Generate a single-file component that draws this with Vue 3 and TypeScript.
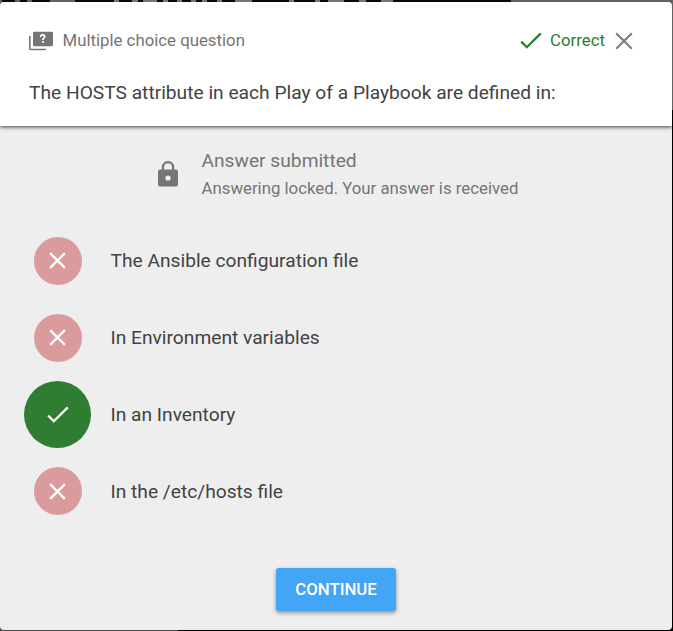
<script setup lang="ts">
interface Answer {
  label: string
  correct: boolean
}

const answers: Answer[] = [
  { label: 'The Ansible configuration file', correct: false },
  { label: 'In Environment variables', correct: false },
  { label: 'In an Inventory', correct: true },
  { label: 'In the /etc/hosts file', correct: false },
]
</script>

<template>
  <div class="backdrop">
    <main class="dialog">
      <header class="head">
        <div class="meta">
          <svg class="quiz-icon" viewBox="0 0 24 20">
            <path d="M.8 5v12.7q0 .8.8.8H17" fill="none" stroke="#757575" stroke-width="1.6" />
            <rect x="4" y="0.8" width="20" height="14.4" rx="1.4" fill="#757575" />
            <path d="M11.7 5.9c0-1.4.8-2 2-2s2 .7 2 1.8c0 1.5-1.8 1.6-1.8 3.2" fill="none" stroke="#fff" stroke-width="1.7" />
            <rect x="13" y="10" width="1.8" height="1.8" fill="#fff" />
          </svg>
          <span class="kind">Multiple choice question</span>
          <svg class="result-icon" viewBox="0 0 22 18">
            <path d="M1.2 9.6l5.6 5.6L20.8 1.4" fill="none" stroke="#2e7d32" stroke-width="2.3" />
          </svg>
          <span class="result">Correct</span>
          <svg class="close-icon" viewBox="0 0 18 18">
            <path d="M1.2 1.2l15.6 15.6M16.8 1.2L1.2 16.8" fill="none" stroke="#857d79" stroke-width="2.2" />
          </svg>
        </div>
        <h1 class="question">The HOSTS attribute in each Play of a Playbook are defined in:</h1>
      </header>

      <section class="status">
        <svg class="lock-icon" viewBox="0 0 20 26">
          <path d="M4.9 9V6.2a5.1 5.1 0 0 1 10.2 0V9" fill="none" stroke="#757575" stroke-width="2.2" />
          <path fill-rule="evenodd" d="M2 8.6h16a2 2 0 0 1 2 2v13a2 2 0 0 1-2 2H2a2 2 0 0 1-2-2v-13a2 2 0 0 1 2-2zM10 14.5a2.6 2.6 0 1 0 0 5.2 2.6 2.6 0 0 0 0-5.2z" fill="#757575" />
        </svg>
        <div class="status-text">
          <div class="status-title">Answer submitted</div>
          <div class="status-sub">Answering locked. Your answer is received</div>
        </div>
      </section>

      <ul class="answers">
        <li v-for="a in answers" :key="a.label" class="answer">
          <span class="slot">
            <span class="mark" :class="{ correct: a.correct }">
              <svg v-if="a.correct" class="tick" viewBox="0 0 22 18">
                <path d="M1.2 9.6l5.6 5.6L20.8 1.4" fill="none" stroke="#fff" stroke-width="2.3" />
              </svg>
              <svg v-else class="cross" viewBox="0 0 18 18">
                <path d="M1.2 1.2l15.6 15.6M16.8 1.2L1.2 16.8" fill="none" stroke="#fff" stroke-width="2.4" />
              </svg>
            </span>
          </span>
          <span class="label">{{ a.label }}</span>
        </li>
      </ul>

      <button class="continue" type="button">CONTINUE</button>
    </main>
  </div>
</template>

<style>
body {
  margin: 0;
  overflow: hidden;
}
</style>

<style scoped>
.backdrop {
  box-sizing: border-box;
  width: 673px;
  height: 631px;
  padding: 2px 1px 1px 0;
  background:
    linear-gradient(90deg, #626262 2px, #0a0708 2px 15px, #626262 15px 20px, #0a0708 20px 27px, #626262 27px 32px, #0a0708 32px 50px, #626262 50px 75px, #0a0708 75px 114px, #777 114px 119px, #0a0708 119px 132px, #777 132px 138px, #0a0708 138px 143px, #777 143px 157px, #0a0708 157px 163px, #777 163px 168px, #0a0708 168px 177px, #777 177px 182px, #0a0708 182px 191px, #777 191px 196px, #0a0708 196px 202px, #777 202px 207px, #0a0708 207px 217px, #777 217px 222px, #0a0708 222px 235px, #777 235px 252px, #0a0708 252px 289px, #777 289px 294px, #0a0708 294px 315px, #777 315px 320px, #0a0708 320px 328px, #777 328px 344px, #0a0708 344px 359px, #777 359px 366px, #0a0708 366px 381px, #777 381px 393px, #0a0708 393px 511px, #626262 511px) 0 0 / 673px 2px no-repeat,
    linear-gradient(#626262 0 110px, #000 110px) 100% 0 / 1px 631px no-repeat,
    linear-gradient(90deg, #4b4b4b 178px, #000 178px) 0 100% / 673px 4px no-repeat,
    #555;
}

.dialog {
  display: flex;
  flex-direction: column;
  width: 672px;
  height: 628px;
  overflow: hidden;
  border-radius: 4px;
  background: #eee;
  font-family: Roboto, "Liberation Sans", sans-serif;
  color: #424242;
}

.head {
  box-sizing: border-box;
  flex: none;
  height: 124px;
  padding: 26px 39px 0 29px;
  background: #fff;
  box-shadow: 0 1px 4px rgba(0, 0, 0, 0.75);
}

.meta {
  display: flex;
  align-items: center;
  height: 26px;
  font-size: 16.8px;
  line-height: 24px;
  color: #757575;
}

.quiz-icon {
  width: 24px;
  height: 20px;
}

.kind {
  margin-left: 9.5px;
  padding-bottom: 2px;
}

.result-icon {
  width: 22px;
  height: 18px;
  margin-left: auto;
}

.result {
  margin: 0 10px 0 8.5px;
  padding-bottom: 2px;
  color: #2e7d32;
}

.close-icon {
  width: 18px;
  height: 18px;
}

.question {
  margin: 24px 0 0;
  font-size: 19.2px;
  font-weight: 400;
  line-height: 30px;
  white-space: nowrap;
}

.status {
  display: flex;
  flex: none;
  align-items: center;
  height: 62px;
  margin: 17px 0 0 158px;
  color: #757575;
}

.lock-icon {
  width: 20px;
  height: 26px;
}

.status-text {
  margin: -2px 0 0 23.5px;
}

.status-title {
  font-size: 19.2px;
  line-height: 32px;
}

.status-sub {
  padding-bottom: 2px;
  font-size: 16.8px;
  line-height: 22px;
}

.answers {
  flex: none;
  margin: 17.5px 0 0;
  padding: 0 0 0 24px;
  list-style: none;
}

.answer {
  display: flex;
  align-items: center;
  height: 76.8px;
  font-size: 19.2px;
}

.slot {
  display: flex;
  justify-content: center;
  width: 67px;
}

.mark {
  display: flex;
  align-items: center;
  justify-content: center;
  width: 48px;
  height: 48px;
  border-radius: 50%;
  background: #d99b9b;
}

.mark.correct {
  width: 67px;
  height: 67px;
  background: #2e7d32;
}

.cross {
  width: 17px;
  height: 17px;
}

.tick {
  width: 22px;
  height: 18px;
  margin-top: 1.5px;
}

.label {
  margin-left: 19.5px;
}

.continue {
  flex: none;
  align-self: center;
  width: 120px;
  height: 43px;
  margin-top: 38.3px;
  padding: 0;
  border: 0;
  border-radius: 3px;
  background: #42a5f5;
  box-shadow: 0 2px 4px rgba(0, 0, 0, 0.4);
  color: #fff;
  font: 500 16.8px/43px Roboto, "Liberation Sans", sans-serif;
}
</style>
